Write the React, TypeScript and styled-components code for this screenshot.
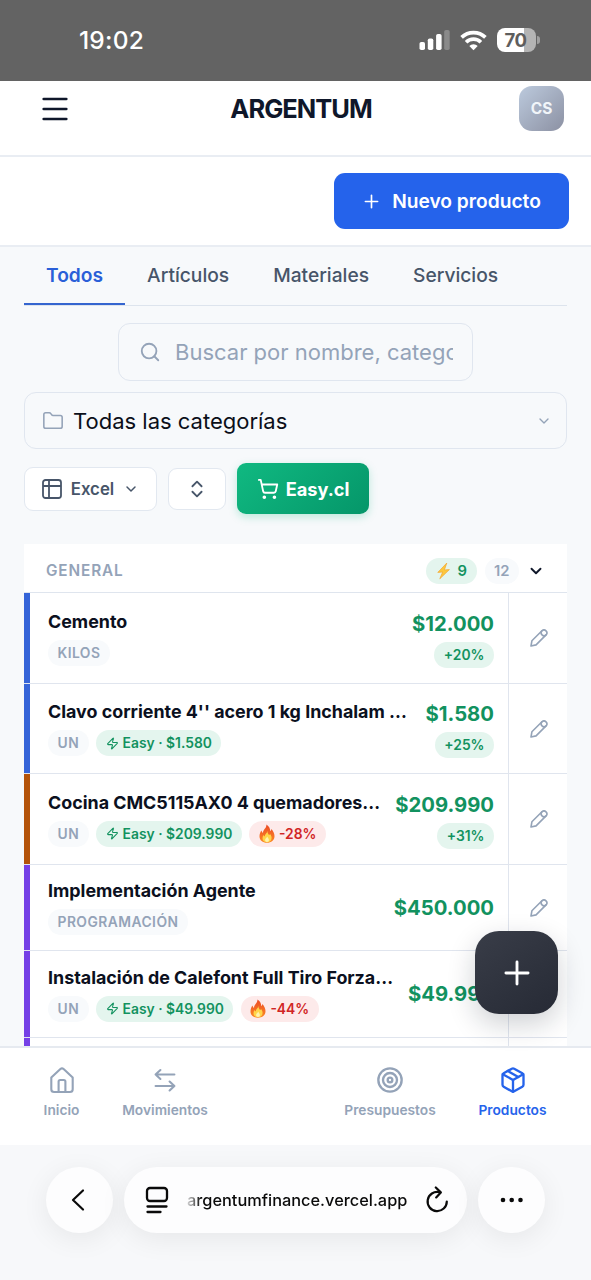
import React from "react";
import styled, { createGlobalStyle, css } from "styled-components";
import {
  ChevronDown, ChevronsUpDown, Folder, Menu, Package, Plus, Search, ShoppingCart, Target, Zap,
} from "lucide-react";

const GlobalStyle = createGlobalStyle`
  *, *::before, *::after { box-sizing: border-box; }
  body { margin: 0; background: #f7f9fb; font-family: Inter, "Liberation Sans", sans-serif; color: #0f172a; -webkit-font-smoothing: antialiased; }
  button, input { font-family: inherit; }
  button { cursor: pointer; border: 0; background: none; padding: 0; margin: 0; color: inherit; }
  svg { flex: none; display: block; }
`;

const Screen = styled.div`
  width: 591px;
  height: 1280px;
  display: flex;
  flex-direction: column;
  overflow: hidden;
  position: relative;
`;

const StatusBar = styled.div`
  height: 81px;
  flex: none;
  background: #636363;
  color: #fff;
  display: flex;
  align-items: center;
  justify-content: space-between;
  padding: 0 51px 1px 79px;
`;
const Clock = styled.span`
  font-size: 24.5px;
  font-weight: 500;
  letter-spacing: 0.2px;
`;
const StatusIcons = styled.div`
  display: flex;
  align-items: center;
  gap: 10px;
`;
const Battery = styled.div`
  width: 39px;
  height: 24px;
  border-radius: 8px;
  background: linear-gradient(90deg, #fff 70%, #b4b4b4 70%);
  color: #5e5e5e;
  font-size: 18.5px;
  font-weight: 700;
  letter-spacing: -0.5px;
  line-height: 24px;
  padding-right: 2px;
  text-align: center;
`;
const BatteryGroup = styled.div`
  display: flex;
  align-items: center;
  gap: 1px;
`;
const BatteryTip = styled.div`
  width: 3px;
  height: 8px;
  border-radius: 0 3px 3px 0;
  background: #a0a0a0;
`;

const Header = styled.header`
  height: 76px;
  flex: none;
  background: #fff;
  border-bottom: 2px solid #e9edf3;
  display: grid;
  grid-template-columns: 60px 1fr 60px;
  align-items: start;
  padding: 5px 27px 0 38px;
`;
const MenuButton = styled.button`
  height: 45px;
  display: flex;
  align-items: center;
`;
const Brand = styled.h1`
  margin: 0;
  line-height: 46px;
  text-align: center;
  font-size: 25.5px;
  font-weight: 720;
  letter-spacing: -1px;
`;
const Avatar = styled.div`
  width: 45px;
  height: 45px;
  justify-self: end;
  border-radius: 13px;
  background: linear-gradient(135deg, #bccadd, #8c91a3);
  color: #f1f5f9;
  font-size: 15.5px;
  font-weight: 700;
  display: grid;
  place-items: center;
`;

const ActionBar = styled.div`
  height: 90px;
  flex: none;
  background: #fff;
  border-bottom: 2px solid #e9edf3;
  display: flex;
  justify-content: flex-end;
  align-items: flex-start;
  padding: 16px 22px 0 0;
`;
const PrimaryButton = styled.button`
  width: 235px;
  height: 56px;
  border-radius: 11px;
  background: #2563eb;
  color: #fff;
  display: flex;
  align-items: center;
  justify-content: center;
  gap: 10px;
  padding-right: 1px;
  font-size: 19.2px;
  font-weight: 600;
`;

const Main = styled.main`
  flex: 1;
  min-height: 0;
  overflow: hidden;
  padding: 0 24px;
`;
const Tabs = styled.nav`
  height: 59px;
  border-bottom: 1px solid #dde4ed;
  display: flex;
`;
const Tab = styled.button<{ $active?: boolean }>`
  height: 58px;
  padding: 0 22px;
  font-size: 19.2px;
  font-weight: ${(p) => (p.$active ? 600 : 500)};
  color: ${(p) => (p.$active ? "#2a5fd8" : "#475569")};
  border-bottom: 2px solid ${(p) => (p.$active ? "#3565cf" : "transparent")};
`;

const field = css`
  height: 58px;
  border: 1.5px solid #e0e6ef;
  border-radius: 12px;
  display: flex;
  align-items: center;
  color: #94a3b8;
`;
const SearchBox = styled.label`
  ${field}
  width: 355px;
  margin: 17px auto 0;
  padding: 0 19px 1px 20px;
  gap: 14px;
`;
const SearchInput = styled.input`
  flex: 1;
  min-width: 0;
  border: 0;
  padding: 0;
  outline: 0;
  background: transparent;
  font-size: 22px;
  &::placeholder { color: #94a3b8; opacity: 1; }
`;
const CategorySelect = styled.button`
  ${field}
  width: 100%;
  height: 57px;
  margin-top: 11px;
  padding: 0 14px 0 17px;
  gap: 9px;
`;
const SelectValue = styled.span`
  flex: 1;
  text-align: left;
  font-size: 22px;
  color: #0b0f19;
`;
const Tools = styled.div`
  height: 51px;
  margin-top: 14px;
  display: flex;
  align-items: center;
  gap: 11px;
`;
const ToolButton = styled.button<{ $width: number; $height: number }>`
  width: ${(p) => p.$width}px;
  height: ${(p) => p.$height}px;
  border: 1.5px solid #e2e8f0;
  border-radius: 9px;
  background: #fff;
  color: #475569;
  display: flex;
  align-items: center;
  justify-content: center;
  gap: 8.5px;
  font-size: 16.8px;
  font-weight: 600;
`;
const StoreButton = styled.button`
  width: 132px;
  height: 51px;
  border-radius: 9px;
  background: linear-gradient(135deg, #10b981, #059669);
  box-shadow: 0 3px 8px rgba(16, 185, 129, 0.25);
  color: #fff;
  display: flex;
  align-items: center;
  justify-content: center;
  gap: 7px;
  font-size: 18.2px;
  font-weight: 700;
`;

const List = styled.section`
  margin-top: 30px;
  background: #fff;
`;
const GroupHeader = styled.div`
  height: 49px;
  border-bottom: 1px solid #dfe5ee;
  display: flex;
  align-items: center;
  padding: 5px 22px 0 22px;
`;
const GroupName = styled.h2`
  margin: 0;
  flex: 1;
  font-size: 15.3px;
  font-weight: 630;
  letter-spacing: 0.9px;
  color: #94a3b8;
`;
const GroupMeta = styled.div`
  display: flex;
  align-items: center;
  gap: 8px;
  color: #0f172a;
`;

type Tone = "plain" | "green" | "red";
const tones = {
  plain: css`background: #f8fafc; color: #94a3b8;`,
  green: css`background: #e4f5ee; color: #12925f;`,
  red: css`background: #fdeaea; color: #d12525;`,
};
const Pill = styled.span<{ $tone: Tone; $size?: number; $spacing?: number; $gap?: number }>`
  height: 26px;
  border-radius: 13px;
  padding: 0 9.5px;
  display: inline-flex;
  align-items: center;
  gap: ${(p) => p.$gap ?? 4}px;
  font-size: ${(p) => p.$size ?? 13.85}px;
  font-weight: 600;
  letter-spacing: ${(p) => p.$spacing ?? 0}px;
  white-space: nowrap;
  ${(p) => tones[p.$tone]}
`;

const Row = styled.article<{ $height: number }>`
  height: ${(p) => p.$height}px;
  border-bottom: 1px solid #e0e5ee;
  display: flex;
`;
const Stripe = styled.div<{ $color: string }>`
  width: 5.5px;
  flex: none;
  background: ${(p) => p.$color};
`;
const Info = styled.div`
  flex: 1;
  min-width: 0;
  display: flex;
  flex-direction: column;
  justify-content: center;
  padding: 0 0 1px 18.5px;
`;
const Name = styled.div`
  font-size: 17.88px;
  font-weight: 650;
  line-height: 24px;
  color: #0b1020;
  white-space: nowrap;
`;
const Tags = styled.div`
  display: flex;
  gap: 7.5px;
  margin-top: 6px;
`;
const PriceColumn = styled.div`
  display: flex;
  flex-direction: column;
  align-items: flex-end;
  justify-content: center;
  gap: 3px;
  padding-right: 14px;
`;
const Price = styled.span`
  font-size: 20.3px;
  font-weight: 720;
  line-height: 30px;
  color: #12925f;
`;
const EditButton = styled.button`
  width: 59px;
  flex: none;
  border-left: 1px solid #e0e5ee;
  padding-left: 2px;
  color: #94a3b8;
  display: grid;
  place-items: center;
`;

const Fab = styled.button`
  position: absolute;
  left: 475px;
  top: 931px;
  width: 83px;
  height: 83px;
  border-radius: 24px;
  background: linear-gradient(145deg, #393d48, #262a35);
  box-shadow: 0 10px 28px rgba(15, 23, 42, 0.2);
  color: #fff;
  display: grid;
  place-items: center;
`;

const BottomNav = styled.nav`
  height: 99px;
  flex: none;
  border-top: 2px solid #e6eaf0;
  background: #fff;
  display: grid;
  grid-template-columns: 123px 84px 122px 122px 123px;
`;
const NavItem = styled.a<{ $active?: boolean }>`
  display: flex;
  flex-direction: column;
  align-items: center;
  padding-top: 18px;
  gap: 6px;
  font-size: 13.75px;
  font-weight: 600;
  line-height: 20px;
  color: ${(p) => (p.$active ? "#2563eb" : "#94a3b8")};
`;

const BrowserBar = styled.footer`
  height: 135px;
  flex: none;
  background: #f7f8fa;
  display: flex;
  align-items: flex-start;
  justify-content: center;
  gap: 11px;
  padding-top: 22px;
`;
const surface = css`
  height: 66px;
  border-radius: 33px;
  background: #fdfdfe;
  box-shadow: 0 6px 28px rgba(0, 0, 0, 0.07);
  color: #0a0a0a;
`;
const RoundButton = styled.button<{ $shift?: number }>`
  ${surface}
  width: 67px;
  padding-right: ${(p) => p.$shift ?? 0}px;
  display: grid;
  place-items: center;
`;
const AddressBar = styled.div`
  ${surface}
  width: 343px;
  display: flex;
  align-items: center;
  padding: 0 18px 0 21px;
`;
const Address = styled.span`
  flex: 1;
  min-width: 0;
  margin: 0 17px 0 18px;
  font-size: 16.35px;
  font-weight: 500;
  white-space: nowrap;
  mask-image: linear-gradient(90deg, rgba(0, 0, 0, 0.15), #000 14px);
`;

const Signal = () => (
  <svg width="31" height="22" viewBox="0 0 31 22" fill="#fff">
    <rect x="0.5" y="13" width="5.5" height="8" rx="1.8" />
    <rect x="8.8" y="9.5" width="5.5" height="11.5" rx="1.8" />
    <rect x="17.1" y="5" width="5.5" height="16" rx="1.8" />
    <rect x="25.2" y="1" width="5.5" height="20" rx="1.8" opacity=".25" />
  </svg>
);
const Wifi = () => (
  <svg width="27" height="21" viewBox="0 0 27 21" fill="none" stroke="#fff" strokeWidth="3.7">
    <path d="M1.6 7.4a17 17 0 0 1 23.8 0" />
    <path d="M6.1 12.2a10.6 10.6 0 0 1 14.8 0" />
    <path d="M13.5 20.2 9.3 15.9a6 6 0 0 1 8.4 0z" fill="#fff" stroke="none" />
  </svg>
);
const Flame = () => (
  <svg width="16" height="19" viewBox="0 0 16 19">
    <defs>
      <linearGradient id="flame" x1="0" y1="0" x2="0" y2="1">
        <stop offset="0" stopColor="#ec4a25" />
        <stop offset="1" stopColor="#fb8a24" />
      </linearGradient>
    </defs>
    <path fill="url(#flame)" d="M7.4.5c2.7 1.8 4 4.2 3.8 6.8.7-.5 1.1-1.3 1.3-2.3 1.8 2.2 3 4.8 3 7.2 0 4-3.2 6.5-7.5 6.5S.5 16.2.5 12.4c0-2.4.8-4.4 1.9-6 .3 1.2.8 2 1.6 2.5C3.8 5.5 7.8 4.3 7.4.5z" />
    <path fill="#ffd54a" d="M8.3 7c.1 2 .9 2.8 1.8 4 .4-.2.7-.6.9-1.1 1.2 1.4 1.6 2.7 1.6 4.1 0 2.6-1.9 4.2-4.5 4.2s-4.6-1.5-4.6-4c0-1.3.4-2.4 1-3.2.4.8.7 1.2 1.2 1.4C5.7 10.2 8 9.6 8.3 7z" />
    <path fill="#fff3b0" d="M8.2 12.5c.2 1 1.7 2 1.7 3.5 0 1.2-.7 1.9-1.9 1.9s-1.9-.8-1.9-1.9c0-1.3 1.7-2.2 2.1-3.5z" />
  </svg>
);
const Bolt = () => (
  <svg width="15" height="18" viewBox="0 0 15 18">
    <path d="M10.8 1 1.8 10.4l4.9-.4L3.8 16.8 13.4 7.6l-5 .3z" fill="#fcc83c" stroke="#f3a52c" strokeWidth=".7" strokeLinejoin="round" />
  </svg>
);
const PencilIcon = () => (
  <svg width="18" height="18" viewBox="0 0 18 18" fill="none" stroke="currentColor" strokeWidth="1.6" strokeLinecap="round" strokeLinejoin="round">
    <path d="M11.95 1.8a2.9 2.9 0 0 1 4.1 4.1L6.05 15.9 1 17l.9-5.2z" />
    <path d="M11.95 1.8a2.9 2.9 0 0 0 4.1 4.1" />
  </svg>
);
const HomeIcon = () => (
  <svg width="26" height="28" viewBox="0 0 26 28" fill="none" stroke="currentColor" strokeWidth="2.1" strokeLinecap="round" strokeLinejoin="round">
    <path d="M2.3 11.5 11.4 3q1.6-1.4 3.2 0l9.1 8.5v11.7q0 2.8-2.8 2.8H5.1q-2.8 0-2.8-2.8z" />
    <path d="M9.6 26V15.6q0-1.6 1.6-1.6h3.6q1.6 0 1.6 1.6V26" />
  </svg>
);
const TransferIcon = () => (
  <svg width="24" height="28" viewBox="0 0 24 28" fill="none" stroke="currentColor" strokeWidth="2.1" strokeLinecap="round" strokeLinejoin="round">
    <path d="M21.4 8.5H2.6M7.4 4 2.6 8.5 7.4 13" />
    <path d="M2.6 20h18.8M16.6 15.5l4.8 4.5-4.8 4.5" />
  </svg>
);
const SheetIcon = () => (
  <svg width="20" height="20" viewBox="0 0 20 20" fill="none" stroke="currentColor" strokeWidth="1.8">
    <rect x="1" y="1" width="18" height="18" rx="2.5" />
    <path d="M7 1v18M1 7h18" />
  </svg>
);
const PageIcon = () => (
  <svg width="24" height="28" viewBox="0 0 24 28" fill="none" stroke="currentColor" strokeWidth="2.3" strokeLinecap="round">
    <rect x="2" y="2" width="20" height="13" rx="3" />
    <path d="M2.5 20.5h19M2.5 26h13" />
  </svg>
);
const Reload = () => (
  <svg width="24" height="28" viewBox="0 0 24 28" fill="none" stroke="currentColor" strokeWidth="2.2" strokeLinecap="round" strokeLinejoin="round">
    <path d="M14.5 6.2A9.6 9.6 0 1 0 21.8 15.5" />
    <path d="M10.8 1.5l5 4.9-4.6 5" />
  </svg>
);
const Back = () => (
  <svg width="14" height="24" viewBox="0 0 14 24" fill="none" stroke="currentColor" strokeWidth="2.2" strokeLinecap="round" strokeLinejoin="round">
    <path d="M12 2.5 2 12l10 9.5" />
  </svg>
);
const Dots = () => (
  <svg width="24" height="6" viewBox="0 0 24 6" fill="currentColor">
    <circle cx="3" cy="3" r="2.3" /><circle cx="11.7" cy="3" r="2.3" /><circle cx="20.5" cy="3" r="2.3" />
  </svg>
);

interface Product {
  name: string;
  unit: string;
  price: string;
  color: string;
  height: number;
  margin?: string;
  store?: string;
  drop?: string;
}

const products: Product[] = [
  { name: "Cemento", unit: "KILOS", price: "$12.000", margin: "+20%", color: "#3564d8", height: 91 },
  { name: "Clavo corriente 4'' acero 1 kg Inchalam …", unit: "UN", price: "$1.580", margin: "+25%", store: "$1.580", color: "#3564d8", height: 90 },
  { name: "Cocina CMC5115AX0 4 quemadores…", unit: "UN", price: "$209.990", margin: "+31%", store: "$209.990", drop: "-28%", color: "#b45309", height: 91 },
  { name: "Implementación Agente", unit: "PROGRAMACIÓN", price: "$450.000", color: "#7540e6", height: 86 },
  { name: "Instalación de Calefont Full Tiro Forza…", unit: "UN", price: "$49.990", store: "$49.990", drop: "-44%", color: "#7540e6", height: 87 },
  { name: "", unit: "", price: "", color: "#7540e6", height: 86 },
];

const ProductRow = ({ item }: { item: Product }) => (
  <Row $height={item.height}>
    <Stripe $color={item.color} />
    <Info>
      <Name>{item.name}</Name>
      {item.unit && (
        <Tags>
          <Pill $tone="plain" $spacing={0.45}>{item.unit}</Pill>
          {item.store && <Pill $tone="green"><Zap size={13} strokeWidth={2} />Easy · {item.store}</Pill>}
          {item.drop && <Pill $tone="red"><Flame />{item.drop}</Pill>}
        </Tags>
      )}
    </Info>
    <PriceColumn>
      <Price>{item.price}</Price>
      {item.margin && <Pill $tone="green">{item.margin}</Pill>}
    </PriceColumn>
    <EditButton aria-label="Editar"><PencilIcon /></EditButton>
  </Row>
);

export default function App() {
  return (
    <Screen>
      <GlobalStyle />
      <StatusBar>
        <Clock>19:02</Clock>
        <StatusIcons>
          <Signal />
          <Wifi />
          <BatteryGroup><Battery>70</Battery><BatteryTip /></BatteryGroup>
        </StatusIcons>
      </StatusBar>
      <Header>
        <MenuButton aria-label="Menú"><Menu size={34} strokeWidth={1.8} /></MenuButton>
        <Brand>ARGENTUM</Brand>
        <Avatar>CS</Avatar>
      </Header>
      <ActionBar>
        <PrimaryButton><Plus size={21} strokeWidth={1.9} />Nuevo producto</PrimaryButton>
      </ActionBar>
      <Main>
        <Tabs>
          <Tab $active>Todos</Tab>
          <Tab>Artículos</Tab>
          <Tab>Materiales</Tab>
          <Tab>Servicios</Tab>
        </Tabs>
        <SearchBox>
          <Search size={22} strokeWidth={2} />
          <SearchInput placeholder="Buscar por nombre, categoría" />
        </SearchBox>
        <CategorySelect>
          <Folder size={22} strokeWidth={1.7} />
          <SelectValue>Todas las categorías</SelectValue>
          <ChevronDown size={16} strokeWidth={2} />
        </CategorySelect>
        <Tools>
          <ToolButton $width={133} $height={44}><SheetIcon />Excel<ChevronDown size={16} strokeWidth={2.2} /></ToolButton>
          <ToolButton $width={58} $height={42} aria-label="Ordenar"><ChevronsUpDown size={22} strokeWidth={2} /></ToolButton>
          <StoreButton><ShoppingCart size={22} strokeWidth={2} />Easy.cl</StoreButton>
        </Tools>
        <List>
          <GroupHeader>
            <GroupName>GENERAL</GroupName>
            <GroupMeta>
              <Pill $tone="green" $size={14.8} $gap={7}><Bolt />9</Pill>
              <Pill $tone="plain" $size={14.8}>12</Pill>
              <ChevronDown size={18} strokeWidth={2.5} />
            </GroupMeta>
          </GroupHeader>
          {products.map((item, i) => <ProductRow key={i} item={item} />)}
        </List>
      </Main>
      <BottomNav>
        <NavItem><HomeIcon />Inicio</NavItem>
        <NavItem><TransferIcon />Movimientos</NavItem>
        <span />
        <NavItem><Target size={28} strokeWidth={2} />Presupuestos</NavItem>
        <NavItem $active><Package size={28} strokeWidth={2} />Productos</NavItem>
      </BottomNav>
      <BrowserBar>
        <RoundButton aria-label="Atrás" $shift={4}><Back /></RoundButton>
        <AddressBar>
          <PageIcon />
          <Address>argentumfinance.vercel.app</Address>
          <Reload />
        </AddressBar>
        <RoundButton aria-label="Más"><Dots /></RoundButton>
      </BrowserBar>
      <Fab aria-label="Agregar"><Plus size={38} strokeWidth={1.8} /></Fab>
    </Screen>
  );
}
